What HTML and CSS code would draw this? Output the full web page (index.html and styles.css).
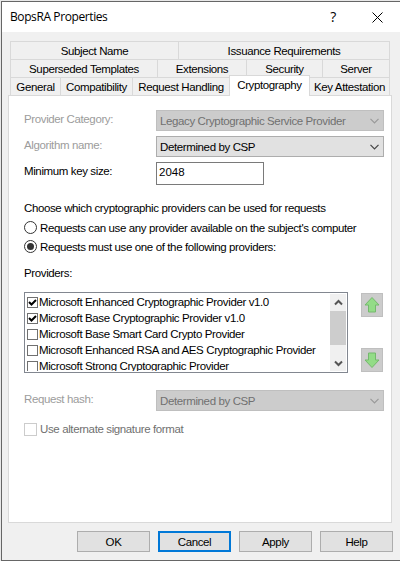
FILE: index.html
```
<!DOCTYPE html>
<html lang="en">

<head>
    <meta charset="UTF-8">
    <meta name="viewport" content="width=device-width, initial-scale=1.0">
    <title>BopsRA Properties</title>
    <link rel="stylesheet" href="styles.css">
</head>

<body>
    <div class="window">
        <div class="titlebar">
            <span class="title">BopsRA Properties</span>
            <span class="help">?</span>
            <svg class="close" width="11" height="11" viewBox="0 0 11 11"><path d="M.5.5l10 10M10.5.5l-10 10" /></svg>
        </div>
        <div class="tabs">
            <div class="tabRow row1">
                <div class="tab"><span>Subject Name</span></div>
                <div class="tab"><span>Issuance Requirements</span></div>
            </div>
            <div class="tabRow row2">
                <div class="tab"><span>Superseded Templates</span></div>
                <div class="tab"><span>Extensions</span></div>
                <div class="tab"><span>Security</span></div>
                <div class="tab"><span>Server</span></div>
            </div>
            <div class="tabRow row3">
                <div class="tab"><span>General</span></div>
                <div class="tab"><span>Compatibility</span></div>
                <div class="tab"><span>Request Handling</span></div>
                <div class="tab active"><span>Cryptography</span></div>
                <div class="tab"><span>Key Attestation</span></div>
            </div>
        </div>
        <div class="panel">
            <div class="field disabled">
                <span class="label">Provider Category:</span>
                <div class="select"><span>Legacy Cryptographic Service Provider</span>
                    <svg width="9" height="6" viewBox="0 0 9 6"><path d="M.5.8l4 4 4-4" /></svg></div>
            </div>
            <div class="field">
                <span class="label gray">Algorithm name:</span>
                <div class="select"><span>Determined by CSP</span>
                    <svg width="9" height="6" viewBox="0 0 9 6"><path d="M.5.8l4 4 4-4" /></svg></div>
            </div>
            <div class="field">
                <span class="label">Minimum key size:</span>
                <div class="input">2048</div>
            </div>
            <p class="choose">Choose which cryptographic providers can be used for requests</p>
            <div class="radio"><i></i><span>Requests can use any provider available on the subject's computer</span></div>
            <div class="radio checked"><i></i><span>Requests must use one of the following providers:</span></div>
            <p class="providers">Providers:</p>
            <div class="listArea">
                <div class="list">
                    <ul>
                        <li><i><svg width="9" height="9" viewBox="0 0 9 9"><path d="M1 4l2.5 2.5L8 2" /></svg></i><span>Microsoft Enhanced Cryptographic Provider v1.0</span></li>
                        <li><i><svg width="9" height="9" viewBox="0 0 9 9"><path d="M1 4l2.5 2.5L8 2" /></svg></i><span>Microsoft Base Cryptographic Provider v1.0</span></li>
                        <li><i></i><span>Microsoft Base Smart Card Crypto Provider</span></li>
                        <li><i></i><span>Microsoft Enhanced RSA and AES Cryptographic Provider</span></li>
                        <li><i></i><span>Microsoft Strong Cryptographic Provider</span></li>
                    </ul>
                    <div class="scrollbar">
                        <svg width="9" height="7" viewBox="0 0 9 7"><path d="M1 5.5L4.5 2 8 5.5" /></svg>
                        <div class="thumb"></div>
                        <svg class="down" width="9" height="7" viewBox="0 0 9 7"><path d="M1 1.5L4.5 5 8 1.5" /></svg>
                    </div>
                </div>
                <div class="order">
                    <div class="arrow"><svg width="16" height="18" viewBox="0 0 16 18"><path d="M8 1.5L15 9h-3.500v7h-7V9H1z" /></svg></div>
                    <div class="arrow"><svg width="16" height="18" viewBox="0 0 16 18"><path d="M8 16.5L15 9h-3.500V2h-7v7H1z" /></svg></div>
                </div>
            </div>
            <div class="field disabled hash">
                <span class="label">Request hash:</span>
                <div class="select"><span>Determined by CSP</span>
                    <svg width="9" height="6" viewBox="0 0 9 6"><path d="M.5.8l4 4 4-4" /></svg></div>
            </div>
            <div class="alternate"><i></i><span>Use alternate signature format</span></div>
        </div>
        <div class="buttons">
            <div class="btn">OK</div>
            <div class="btn default">Cancel</div>
            <div class="btn">Apply</div>
            <div class="btn">Help</div>
        </div>
    </div>
</body>

</html>
```

FILE: styles.css
```
* {
    padding: 0;
    margin: 0;
    box-sizing: border-box;
    list-style: none;
}

body {
    width: 400px;
    height: 561px;
    padding: 1px 0 0 1px;
    overflow: hidden;
    background: #e8e8e8;
    font: 11.5px/16px "Liberation Sans", Arial, sans-serif;
    letter-spacing: -0.38px;
    color: #000;
}

svg {
    display: block;
    fill: none;
}

span,
p {
    white-space: nowrap;
}

.window {
    width: 399px;
    height: 560px;
    border: 1px solid #666;
    border-right: none;
    background: #f0f0f0;
}

.titlebar {
    display: flex;
    align-items: center;
    height: 30px;
    padding: 0 17px 0 8px;
    background: #fff;
}

.title {
    flex: 1;
    font: 12px/16px "Open Sans", "Noto Sans", sans-serif;
    letter-spacing: -0.4px;
}

.help {
    margin-right: 36px;
    font: 14px/16px "Open Sans", "Noto Sans", sans-serif;
}

.close path {
    stroke: #000;
}

.tabs {
    width: 380px;
    margin: 9px 0 0 8px;
}

.tabRow {
    display: grid;
    height: 18px;
    border-left: 1px solid #d9d9d9;
}

.row1 {
    grid-template-columns: 168px 211px;
}

.row2 {
    grid-template-columns: 147px 89px 76px 67px;
}

.row3 {
    grid-template-columns: 50px 72px 97px 80px 80px;
}

.tab {
    height: 18px;
    border-top: 1px solid #d9d9d9;
    border-right: 1px solid #d9d9d9;
    line-height: 19px;
    text-align: center;
}

.tab.active {
    position: relative;
    z-index: 1;
    height: 21px;
    margin: -2px 0 0 -1px;
    border-left: 1px solid #d9d9d9;
    background: #fff;
}

.panel {
    width: 384px;
    height: 428px;
    margin-left: 6px;
    padding: 14px 0 0 15px;
    border: 1px solid #d9d9d9;
    background: #fff;
}

.field {
    display: flex;
    height: 21px;
    margin-bottom: 5px;
}

.label {
    width: 132px;
    line-height: 18px;
}

.disabled,
.gray {
    color: #9c9c9c;
}

.select {
    display: flex;
    align-items: center;
    justify-content: space-between;
    width: 228px;
    height: 21px;
    padding: 1px 4px 0 3px;
    border: 1px solid #adadad;
    background: #e1e1e1;
    color: #000;
}

.select path {
    stroke: #444;
    stroke-width: 1.2;
}

.disabled .select {
    border-color: #bfbfbf;
    background: #ccc;
    color: #707070;
}

.disabled .select path {
    stroke: #9a9a9a;
}

.input {
    width: 108px;
    height: 23px;
    padding: 1px 2px;
    border: 1px solid #7a7a7a;
    letter-spacing: 0;
}

.choose {
    margin-top: 16px;
    line-height: 19px;
}

.radio {
    display: flex;
    align-items: center;
    height: 19px;
}

.radio i {
    width: 13px;
    height: 13px;
    margin-right: 3px;
    border: 1px solid #333;
    border-radius: 50%;
}

.radio.checked i {
    padding: 2px;
    background: #333 content-box;
}

.providers {
    margin-top: 9px;
}

.listArea {
    display: flex;
    margin-top: 11px;
}

.list {
    display: flex;
    width: 324px;
    height: 81px;
    padding: 1px;
    border: 1px solid #828790;
}

.list ul {
    flex: 1;
    height: 77px;
    overflow: hidden;
}

.list li {
    display: flex;
    height: 16px;
    padding-left: 1px;
}

.list i {
    flex: none;
    width: 11px;
    height: 11px;
    margin: 3px 1px 0 0;
    border: 1px solid #707070;
}

.list i path {
    stroke: #000;
    stroke-width: 2;
}

.scrollbar {
    display: flex;
    flex-direction: column;
    align-items: center;
    width: 16px;
    height: 77px;
    padding-top: 5px;
    background: #f0f0f0;
}

.scrollbar path {
    stroke: #555;
    stroke-width: 2;
}

.thumb {
    width: 16px;
    height: 34px;
    margin-top: 5px;
    background: #cdcdcd;
}

.down {
    margin-top: 15px;
}

.order {
    display: flex;
    flex-direction: column;
    justify-content: space-between;
    height: 79px;
    margin: 1px 0 0 13px;
}

.arrow {
    width: 22px;
    height: 24px;
    padding: 2px;
    border: 1px solid #bfbfbf;
    background: #ccc;
}

.arrow path {
    fill: #93dc87;
    stroke: #74b96d;
}

.hash {
    margin: 17px 0 11px;
}

.alternate {
    display: flex;
    align-items: center;
    height: 14px;
    color: #707070;
}

.alternate i {
    width: 13px;
    height: 13px;
    margin-right: 3px;
    border: 1px solid #ccc;
}

.buttons {
    display: flex;
    gap: 8px;
    margin: 8px 0 0 75px;
}

.btn {
    width: 73px;
    height: 21px;
    border: 1px solid #adadad;
    background: #e1e1e1;
    line-height: 20px;
    text-align: center;
}

.btn.default {
    border: 2px solid #0078d7;
    line-height: 18px;
}
```
